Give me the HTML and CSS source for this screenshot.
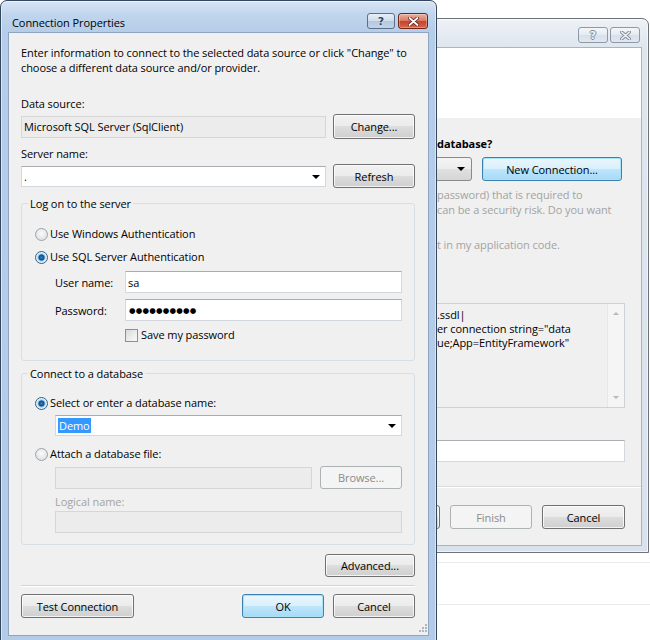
FILE: index.html
```html
<!DOCTYPE html>
<html lang="en">
<head>
    <meta charset="UTF-8">
    <meta name="viewport" content="width=device-width, initial-scale=1.0">
    <title>Connection Properties</title>
    <link rel="stylesheet" href="styles.css">
</head>
<body>

<!-- IDE surface under the windows -->
<div class="ide-pane">
    <div class="ide-row"></div>
    <div class="ide-row"></div>
    <div class="ide-row"></div>
</div>

<!-- Wizard window, inactive, partly covered by the dialog -->
<section class="window inactive wizard">
    <div class="titlebar">
        <div class="caption-buttons">
            <span class="cap-btn help">?</span>
            <span class="cap-btn close">
                <svg width="11" height="9" viewBox="0 0 11 9">
                    <path d="M1.5 1 L9.5 8 M9.5 1 L1.5 8" stroke="#7f8b99" stroke-width="3.4" stroke-linecap="round"/>
                    <path d="M1.5 1 L9.5 8 M9.5 1 L1.5 8" stroke="#f1f4f7" stroke-width="1.6" stroke-linecap="round"/>
                </svg>
            </span>
        </div>
    </div>
    <div class="client">
        <div class="wizard-banner"></div>
        <div class="wizard-body">
            <div class="heading">database?</div>
            <div class="combo-row">
                <span class="dropdown"></span>
                <button class="btn btn-default new-conn">New Connection...</button>
            </div>
            <p class="muted note">password) that is required to<br>can be a security risk. Do you want</p>
            <p class="muted choice">t in my application code.</p>
            <div class="conn-string">
                <div class="conn-text">.ssdl|<br>er connection string="data<br>ue;App=EntityFramework"</div>
                <div class="scrollbar">
                    <span class="arrow up"></span>
                    <span class="arrow down"></span>
                </div>
            </div>
            <div class="field config-name"></div>
            <hr class="separator wide">
            <div class="wizard-buttons">
                <span class="btn stub"></span>
                <button class="btn" disabled>Finish</button>
                <button class="btn cancel-wide">Cancel</button>
            </div>
        </div>
    </div>
</section>

<!-- Connection Properties dialog -->
<section class="window active dialog">
    <div class="titlebar">
        <span class="title">Connection Properties</span>
        <div class="caption-buttons">
            <span class="cap-btn help">?</span>
            <span class="cap-btn close">
                <svg width="11" height="9" viewBox="0 0 11 9">
                    <path d="M1.5 1 L9.5 8 M9.5 1 L1.5 8" stroke="#5e1b10" stroke-width="3.4" stroke-linecap="round"/>
                    <path d="M1.5 1 L9.5 8 M9.5 1 L1.5 8" stroke="#fff" stroke-width="1.8" stroke-linecap="round"/>
                </svg>
            </span>
        </div>
    </div>
    <div class="client">
        <p class="intro">Enter information to connect to the selected data source or click "Change" to<br>choose a different data source and/or provider.</p>

        <div class="label first">Data source:</div>
        <div class="row">
            <div class="field readonly grow">Microsoft SQL Server (SqlClient)</div>
            <button class="btn tall">Change...</button>
        </div>

        <div class="label">Server name:</div>
        <div class="row server-row">
            <div class="field combo grow">.</div>
            <button class="btn refresh">Refresh</button>
        </div>

        <fieldset class="group logon">
            <legend>Log on to the server</legend>
            <div class="option"><span class="radio"></span>Use Windows Authentication</div>
            <div class="option second"><span class="radio on"></span>Use SQL Server Authentication</div>
            <div class="pair">
                <span>User name:</span>
                <div class="field">sa</div>
            </div>
            <div class="pair">
                <span>Password:</span>
                <div class="field"><span class="dots">●●●●●●●●●●</span></div>
            </div>
            <div class="option save"><span class="check"></span>Save my password</div>
        </fieldset>

        <fieldset class="group database">
            <legend>Connect to a database</legend>
            <div class="option"><span class="radio on"></span>Select or enter a database name:</div>
            <div class="field combo indent db-name"><span class="selected">Demo</span></div>
            <div class="option attach"><span class="radio"></span>Attach a database file:</div>
            <div class="row browse-row indent">
                <div class="field readonly grow"></div>
                <button class="btn" disabled>Browse...</button>
            </div>
            <div class="muted indent logical">Logical name:</div>
            <div class="field readonly indent logical-field"></div>
        </fieldset>

        <div class="actions">
            <button class="btn advanced">Advanced...</button>
        </div>

        <hr class="separator">

        <div class="footer">
            <button class="btn test">Test Connection</button>
            <button class="btn btn-default">OK</button>
            <button class="btn">Cancel</button>
        </div>

        <svg class="grip" width="8" height="8" viewBox="0 0 8 8">
            <g fill="#aeb6c0">
                <rect x="6" y="0" width="2" height="2"/>
                <rect x="3" y="3" width="2" height="2"/>
                <rect x="6" y="3" width="2" height="2"/>
                <rect x="0" y="6" width="2" height="2"/>
                <rect x="3" y="6" width="2" height="2"/>
                <rect x="6" y="6" width="2" height="2"/>
            </g>
        </svg>
    </div>
</section>

</body>
</html>
```

FILE: styles.css
```css
* {
    box-sizing: border-box;
}

html, body {
    margin: 0;
}

body {
    position: relative;
    width: 650px;
    height: 640px;
    overflow: hidden;
    background: #fff;
    font-family: "Open Sans", "Noto Sans", sans-serif;
    font-size: 11px;
    letter-spacing: -0.08px;
    line-height: 15px;
    color: #000;
}

p {
    margin: 0;
}

/* IDE rows behind everything */
.ide-pane {
    position: absolute;
    left: 0;
    right: 0;
    top: 521px;
}

.ide-row {
    height: 42px;
    border-bottom: 1px solid #ebebeb;
}

/* Window chrome */
.window {
    position: absolute;
    display: flex;
    flex-direction: column;
    border: 1px solid #33475f;
    border-radius: 7px 7px 0 0;
}

.window.active {
    left: 0;
    top: 0;
    width: 437px;
    height: 644px;
    padding: 0 7px 7px;
    background: linear-gradient(#d8e6f5, #bfd5ed 14px, #b5cde9 31px, #b3cbe7);
    box-shadow: inset 0 0 0 1px rgba(255, 255, 255, 0.5);
    z-index: 2;
}

.window.inactive {
    left: 416px;
    top: 18px;
    width: 233px;
    height: 535px;
    padding: 0 6px 6px;
    border-color: #6b727a;
    background: linear-gradient(#eef2f6, #dfe6ee 28px, #d9e1ea);
    box-shadow: inset 0 0 0 1px rgba(255, 255, 255, 0.6);
    z-index: 1;
}

.titlebar {
    display: flex;
    align-items: flex-start;
    flex: none;
}

.active .titlebar {
    height: 31px;
}

.inactive .titlebar {
    height: 28px;
}

.title {
    margin: 14px 0 0 4px;
    line-height: 16px;
}

.caption-buttons {
    display: flex;
    gap: 3px;
    margin-left: auto;
}

.active .caption-buttons {
    margin-top: 12px;
    margin-right: 1px;
}

.inactive .caption-buttons {
    margin-top: 8px;
    margin-right: 2px;
    gap: 2px;
}

.cap-btn {
    display: flex;
    align-items: center;
    justify-content: center;
    width: 28px;
    height: 16px;
    border: 1px solid #5a6f8a;
    border-radius: 3px;
    font: bold 11px "DejaVu Sans", sans-serif;
}

.active .help {
    background: linear-gradient(#e6eef7, #cddcec 50%, #b4c8e0 50%, #c0d3e9);
    color: #2d4663;
    text-shadow: 0 0 2px #fff;
}

.active .close {
    width: 30px;
    border-color: #6e2418;
    background: linear-gradient(#eab1a4, #d9785f 50%, #c5432a 50%, #d6654b);
    box-shadow: inset 0 0 0 1px rgba(255, 255, 255, 0.3);
}

.inactive .cap-btn {
    width: 30px;
    border-color: #8c99a9;
    background: linear-gradient(#f3f6f9, #e6ebf1 50%, #d9e0e9 50%, #e0e7ef);
    color: #f1f4f7;
    text-shadow: 1px 0 0 #7f8b99, -1px 0 0 #7f8b99, 0 1px 0 #7f8b99, 0 -1px 0 #7f8b99;
}

.client {
    position: relative;
    flex: 1;
    display: flex;
    flex-direction: column;
    background: #f0f0f0;
    border: 1px solid #8ea5c1;
}

.wizard .client {
    border-color: #a9b4c1;
}

/* Common controls */
.row {
    display: flex;
    align-items: center;
    gap: 7px;
}

.grow {
    flex: 1;
    min-width: 0;
}

.field {
    display: flex;
    align-items: center;
    height: 22px;
    padding: 0 2px;
    white-space: nowrap;
    background: #fff;
    border: 1px solid #d2d8de;
    border-top-color: #abadb3;
}

.field.readonly {
    background: #ececec;
    border-color: #d6d6d6;
}

.combo {
    position: relative;
    height: 21px;
    padding-right: 18px;
}

.combo::after {
    content: "";
    position: absolute;
    right: 5px;
    top: 8px;
    border-left: 4px solid transparent;
    border-right: 4px solid transparent;
    border-top: 4px solid #000;
}

.btn {
    display: inline-flex;
    align-items: center;
    justify-content: center;
    flex: none;
    width: 82px;
    height: 23px;
    padding: 0;
    font: inherit;
    letter-spacing: inherit;
    color: #000;
    border: 1px solid #707070;
    border-radius: 3px;
    background: linear-gradient(#f2f2f2, #ebebeb 50%, #dddddd 50%, #cfcfcf);
    box-shadow: inset 0 0 0 1px rgba(255, 255, 255, 0.75);
}

.btn-default {
    border-color: #3c7fb1;
    background: linear-gradient(#eaf6fd, #d9f0fc 50%, #bee6fd 50%, #a7d9f5);
    box-shadow: inset 0 0 0 1px #a6e2f8;
}

.btn:disabled {
    color: #8a8a8a;
    border-color: #adb2b5;
    background: #f4f4f4;
    box-shadow: none;
}

.btn.tall {
    height: 25px;
}

.option {
    display: flex;
    align-items: center;
    gap: 2px;
    line-height: 16px;
}

.radio {
    flex: none;
    width: 13px;
    height: 13px;
    border-radius: 50%;
    border: 1px solid #9aa3ac;
    background: radial-gradient(circle at 50% 40%, #fbfbfb, #d9d9d9);
}

.radio.on {
    border-color: #2c628b;
    background: radial-gradient(circle, #2f86cc 0, #0e4a7f 2.6px, #8cc0e8 3.4px, #dfe8f0 4.4px, #f6f6f6 6px);
}

.check {
    flex: none;
    width: 13px;
    height: 13px;
    margin-right: 1px;
    border: 1px solid #8e8f8f;
    background: linear-gradient(135deg, #d9d9d9, #fbfbfb);
}

.muted {
    color: #a3a3a3;
}

.indent {
    margin-left: 20px;
}

/* Connection Properties dialog */
.dialog .client {
    padding: 12px 13px 0 12px;
}

.label {
    margin-top: 7px;
}

.label.first {
    margin-top: 21px;
}

.label + .row {
    margin-top: 3px;
}

.server-row {
    margin-top: 4px;
    height: 24px;
}

.btn.refresh {
    height: 24px;
}

.group {
    margin: 8px 0 0;
    min-width: 0;
    border: 1px solid #d5dfe5;
    border-radius: 3px;
    padding: 15px 12px 17px 13px;
}

.group legend {
    margin-left: -7px;
    padding: 0 2px;
    line-height: 15px;
}

.option.second {
    margin-top: 7px;
}

.pair {
    display: grid;
    grid-template-columns: 70px 1fr;
    align-items: center;
    margin: 6px 0 0 20px;
}

.dots {
    font-family: "DejaVu Sans", sans-serif;
    font-size: 7.5px;
    letter-spacing: 0.2px;
    padding-left: 1px;
}

.option.save {
    margin: 6px 0 0 90px;
    gap: 2px;
}

.group.database {
    margin-top: 5px;
    padding-top: 14px;
    padding-bottom: 11px;
}

.db-name {
    margin-top: 4px;
}

.selected {
    padding: 0 1px;
    background: #3399ff;
    color: #fff;
}

.option.attach {
    margin-top: 10px;
}

.browse-row {
    margin-top: 4px;
    gap: 8px;
}

.logical {
    margin-top: 5px;
}

.logical-field {
    margin-top: 2px;
}

.actions {
    display: flex;
    justify-content: flex-end;
    margin-top: 9px;
}

.btn.advanced {
    width: 90px;
}

.separator {
    height: 2px;
    margin: 8px 0 0;
    border: 0;
    border-top: 1px solid #d5d5d5;
    border-bottom: 1px solid #fff;
}

.footer {
    display: flex;
    gap: 9px;
    margin-top: 7px;
}

.footer .btn {
    height: 24px;
}

.btn.test {
    width: 113px;
    margin-right: auto;
}

.grip {
    position: absolute;
    right: 1px;
    bottom: 3px;
}

/* Data connection wizard */
.wizard-banner {
    flex: none;
    height: 70px;
    background: #fff;
}

.wizard-body {
    display: flex;
    flex-direction: column;
    padding: 0 16px 0 13px;
}

.heading {
    margin-top: 18px;
    font-weight: bold;
}

.combo-row {
    display: flex;
    align-items: center;
    gap: 10px;
    margin-top: 6px;
}

.dropdown {
    position: relative;
    width: 48px;
    height: 24px;
    margin-left: -13px;
    border: 1px solid #8a8a8a;
    border-radius: 3px;
    background: linear-gradient(#f4f4f4, #ececec 50%, #e0e0e0 50%, #d6d6d6);
}

.dropdown::after {
    content: "";
    position: absolute;
    right: 6px;
    top: 9px;
    border-left: 4px solid transparent;
    border-right: 4px solid transparent;
    border-top: 4px solid #000;
}

.btn.new-conn {
    width: 140px;
    height: 24px;
}

.note {
    margin-top: 6px;
}

.choice {
    margin-top: 20px;
}

.conn-string {
    display: flex;
    height: 105px;
    margin: 51px 0 0 -13px;
    background: #f0f0f0;
    border: 1px solid #cdd2d8;
}

.conn-text {
    flex: 1;
    padding: 4px 0 0 12px;
    line-height: 14px;
    white-space: nowrap;
}

.scrollbar {
    position: relative;
    width: 17px;
    background: #f5f5f5;
    border-left: 1px solid #e6e6e6;
}

.arrow {
    position: absolute;
    left: 5px;
    border-left: 3px solid transparent;
    border-right: 3px solid transparent;
}

.arrow.up {
    top: 8px;
    border-bottom: 3px solid #b9b9b9;
}

.arrow.down {
    bottom: 8px;
    border-top: 3px solid #b9b9b9;
}

.config-name {
    margin: 32px 0 0 -13px;
}

.separator.wide {
    margin: 24px -16px 0 -13px;
    border-top-color: #dcdcdc;
}

.wizard-buttons {
    display: flex;
    justify-content: flex-end;
    gap: 10px;
    margin-top: 17px;
}

.wizard-buttons .btn {
    height: 24px;
}

.btn.stub {
    width: 20px;
}

.btn.cancel-wide {
    width: 83px;
}
```
